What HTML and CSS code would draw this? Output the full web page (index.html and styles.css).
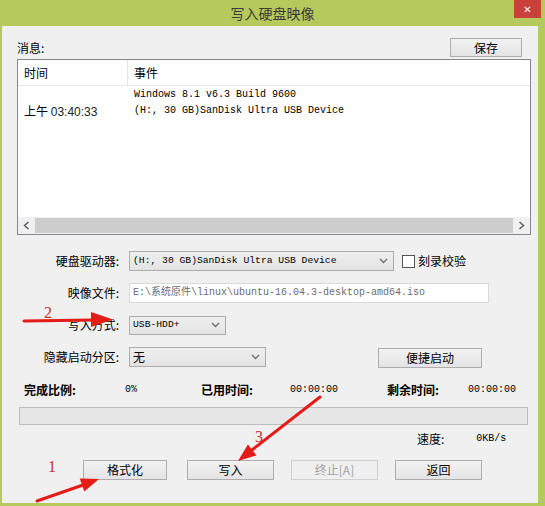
FILE: index.html
```html
<!DOCTYPE html>
<html lang="zh-CN">
<head>
  <meta charset="UTF-8">
  <title>写入硬盘映像</title>
  <link rel="stylesheet" href="styles.css">
</head>
<body>
  <div class="window">
    <div class="titlebar">
      <span class="title">写入硬盘映像</span>
      <span class="close">✕</span>
    </div>

    <div class="content">
      <div class="msg-head">
        <span>消息:</span>
        <button class="btn btn-save">保存</button>
      </div>

      <div class="list">
        <div class="list-head">
          <span class="col-time">时间</span>
          <span class="col-event">事件</span>
        </div>
        <div class="list-body">
          <div class="item">
            <div class="col-time time">上午 <span class="clock">03:40:33</span></div>
            <div class="col-event mono">
              <div>Windows 8.1 v6.3 Build 9600</div>
              <div>(H:, 30 GB)SanDisk Ultra USB Device</div>
            </div>
          </div>
        </div>
        <div class="hscroll">
          <svg class="arr" width="8" height="9" viewBox="0 0 8 9"><path d="M6 1 L2 4.5 L6 8" fill="none" stroke="#606060" stroke-width="1.5"/></svg>
          <span class="thumb"></span>
          <svg class="arr" width="8" height="9" viewBox="0 0 8 9"><path d="M2 1 L6 4.5 L2 8" fill="none" stroke="#606060" stroke-width="1.5"/></svg>
        </div>
      </div>

      <div class="form">
        <div class="row">
          <span class="label">硬盘驱动器:</span>
          <div class="select sel-drive">
            <span class="mono-s">(H:, 30 GB)SanDisk Ultra USB Device</span>
            <svg width="9" height="6" viewBox="0 0 9 6"><path d="M1 1 L4.5 4.5 L8 1" fill="none" stroke="#707070" stroke-width="1.4"/></svg>
          </div>
          <span class="check"></span>
          <span>刻录校验</span>
        </div>
        <div class="row">
          <span class="label">映像文件:</span>
          <div class="input mono">E:\系统原件\linux\ubuntu-16.04.3-desktop-amd64.iso</div>
        </div>
        <div class="row">
          <span class="label">写入方式:</span>
          <div class="select sel-mode">
            <span class="mono-s">USB-HDD+</span>
            <svg width="9" height="6" viewBox="0 0 9 6"><path d="M1 1 L4.5 4.5 L8 1" fill="none" stroke="#707070" stroke-width="1.4"/></svg>
          </div>
        </div>
        <div class="row">
          <span class="label">隐藏启动分区:</span>
          <div class="select sel-hide">
            <span>无</span>
            <svg width="9" height="6" viewBox="0 0 9 6"><path d="M1 1 L4.5 4.5 L8 1" fill="none" stroke="#707070" stroke-width="1.4"/></svg>
          </div>
          <button class="btn btn-quick">便捷启动</button>
        </div>
      </div>

      <div class="stats">
        <span class="stat-label">完成比例:</span>
        <span class="num">0%</span>
        <span class="stat-label">已用时间:</span>
        <span class="num">00:00:00</span>
        <span class="stat-label">剩余时间:</span>
        <span class="num">00:00:00</span>
      </div>

      <div class="progress"></div>

      <div class="speed">
        <span>速度:</span>
        <span class="num">0KB/s</span>
      </div>

      <div class="actions">
        <button class="btn btn-format">格式化</button>
        <button class="btn">写入</button>
        <button class="btn" disabled>终止[A]</button>
        <button class="btn">返回</button>
      </div>
    </div>

    <svg class="marks" width="545" height="506" viewBox="0 0 545 506">
      <g stroke="#e41b17" stroke-width="3" fill="none" stroke-linecap="round">
        <line x1="24" y1="321" x2="94" y2="320"/>
        <line x1="37" y1="501" x2="83" y2="485"/>
        <line x1="320" y1="397" x2="252" y2="450"/>
      </g>
      <g fill="#e41b17">
        <polygon points="91,312 113,319.5 91,327"/>
        <polygon points="99,479 84.3,491.6 79.7,478.4"/>
        <polygon points="238,461 256.5,455.4 247.9,444.4"/>
      </g>
      <g class="mark-num">
        <text x="44" y="318">2</text>
        <text x="48" y="472">1</text>
        <text x="255" y="442">3</text>
      </g>
    </svg>
  </div>
</body>
</html>
```

FILE: styles.css
```css
body {
  margin: 0;
  background: #b6c95c;
  font-family: "Noto Sans CJK SC", sans-serif;
  font-size: 12px;
  color: #000;
}
.window {
  position: relative;
  width: 545px;
  height: 506px;
  display: flex;
  flex-direction: column;
}
.titlebar {
  height: 26px;
  display: grid;
  grid-template-columns: 1fr auto 1fr;
  align-items: start;
}
.title {
  grid-column: 2;
  font-size: 14px;
  line-height: 26px;
  color: #3a3a3a;
}
.close {
  grid-column: 3;
  justify-self: end;
  width: 27px;
  height: 18px;
  margin-right: 4px;
  background: #c9413b;
  color: #fff;
  font-family: "DejaVu Sans", sans-serif;
  font-size: 10px;
  font-weight: bold;
  display: flex;
  align-items: center;
  justify-content: center;
}
.content {
  flex: 1;
  margin: 0 7px 3px 2px;
  background: #f0f0f0;
  display: flex;
  flex-direction: column;
}
.mono {
  font-family: "Liberation Mono", "Noto Sans CJK SC", monospace;
  font-size: 10px;
}
.mono-s {
  font-family: "Liberation Mono", monospace;
  font-size: 9.7px;
}
.num {
  font-family: "Liberation Mono", monospace;
  font-size: 10px;
}
.clock {
  font-family: "Liberation Sans", sans-serif;
  font-size: 12px;
  color: #222;
}

.btn {
  font-family: "Noto Sans CJK SC", sans-serif;
  font-size: 12px;
  line-height: 1;
  padding: 0;
  height: 20px;
  border: 1px solid #adadad;
  background: linear-gradient(#f2f2f2, #e4e4e4);
  color: #000;
}
.btn:disabled {
  border-color: #cfcfcf;
  background: #f0f0f0;
  color: #a3a3a3;
}

.msg-head {
  height: 19px;
  margin: 12px 16px 2px 15px;
  display: flex;
  align-items: center;
  justify-content: space-between;
  line-height: 1;
}
.btn-save {
  width: 72px;
  height: 19px;
}

.list {
  margin: 0 7px 0 15px;
  height: 176px;
  border: 1px solid #828790;
  background: #fff;
  display: flex;
  flex-direction: column;
  box-sizing: border-box;
}
.list-head {
  height: 25px;
  display: flex;
  align-items: center;
  border-bottom: 1px solid #e8e8e8;
  line-height: 1;
}
.col-time {
  width: 110px;
  padding-left: 6px;
  box-sizing: border-box;
  flex-shrink: 0;
}
.list-head .col-time {
  border-right: 1px solid #e5e5e5;
  height: 25px;
  display: flex;
  align-items: center;
}
.col-event {
  padding-left: 6px;
}
.list-body {
  flex: 1;
}
.item {
  display: flex;
  padding-top: 1px;
  line-height: 16px;
}
.time {
  padding-top: 16px;
}
.hscroll {
  height: 17px;
  display: flex;
  align-items: center;
  background: #f0f0f0;
}
.arr {
  width: 17px;
  flex-shrink: 0;
}
.thumb {
  flex: 1;
  height: 15px;
  background: #cdcdcd;
}

.form {
  margin-top: 16px;
  display: flex;
  flex-direction: column;
  gap: 12px;
}
.row {
  height: 20px;
  display: flex;
  align-items: center;
  line-height: 1;
}
.label {
  width: 117px;
  text-align: right;
  margin-right: 10px;
}
.select {
  height: 20px;
  box-sizing: border-box;
  border: 1px solid #acacac;
  background: linear-gradient(#efefef, #e3e3e3);
  display: flex;
  align-items: center;
  justify-content: space-between;
  padding: 0 5px 0 3px;
}
.sel-drive { width: 265px; }
.sel-mode { width: 97px; height: 19px; }
.sel-hide { width: 137px; }
.check {
  width: 11px;
  height: 11px;
  border: 1px solid #555;
  background: #fff;
  margin: 0 3px 0 8px;
}
.input {
  width: 360px;
  height: 20px;
  box-sizing: border-box;
  border: 1px solid #d9d9d9;
  background: #fff;
  color: #6d6d6d;
  display: flex;
  align-items: center;
  padding-left: 3px;
}
.btn-quick {
  width: 104px;
  margin-left: 112px;
  margin-top: 2px;
}

.stats {
  margin: 15px 0 0 22px;
  height: 16px;
  display: grid;
  grid-template-columns: 101px 76px 89px 97px 81px auto;
  align-items: center;
  line-height: 1;
}
.stat-label {
  font-weight: bold;
}
.progress {
  margin: 9px 10px 0 17px;
  height: 18px;
  box-sizing: border-box;
  border: 1px solid #bcbcbc;
  background: #e6e6e6;
}
.speed {
  margin: 6px 0 0 415px;
  height: 16px;
  display: flex;
  align-items: center;
  gap: 32px;
  line-height: 1;
}
.actions {
  margin: 13px 0 0 81px;
  display: flex;
  gap: 17px;
}
.actions .btn {
  width: 87px;
}
.actions .btn-format {
  width: 84px;
  margin-right: 3px;
}

.marks {
  position: absolute;
  top: 0;
  left: 0;
  pointer-events: none;
}
.mark-num text {
  font-family: "Liberation Serif", serif;
  font-size: 16px;
  fill: #c9302c;
}
```
